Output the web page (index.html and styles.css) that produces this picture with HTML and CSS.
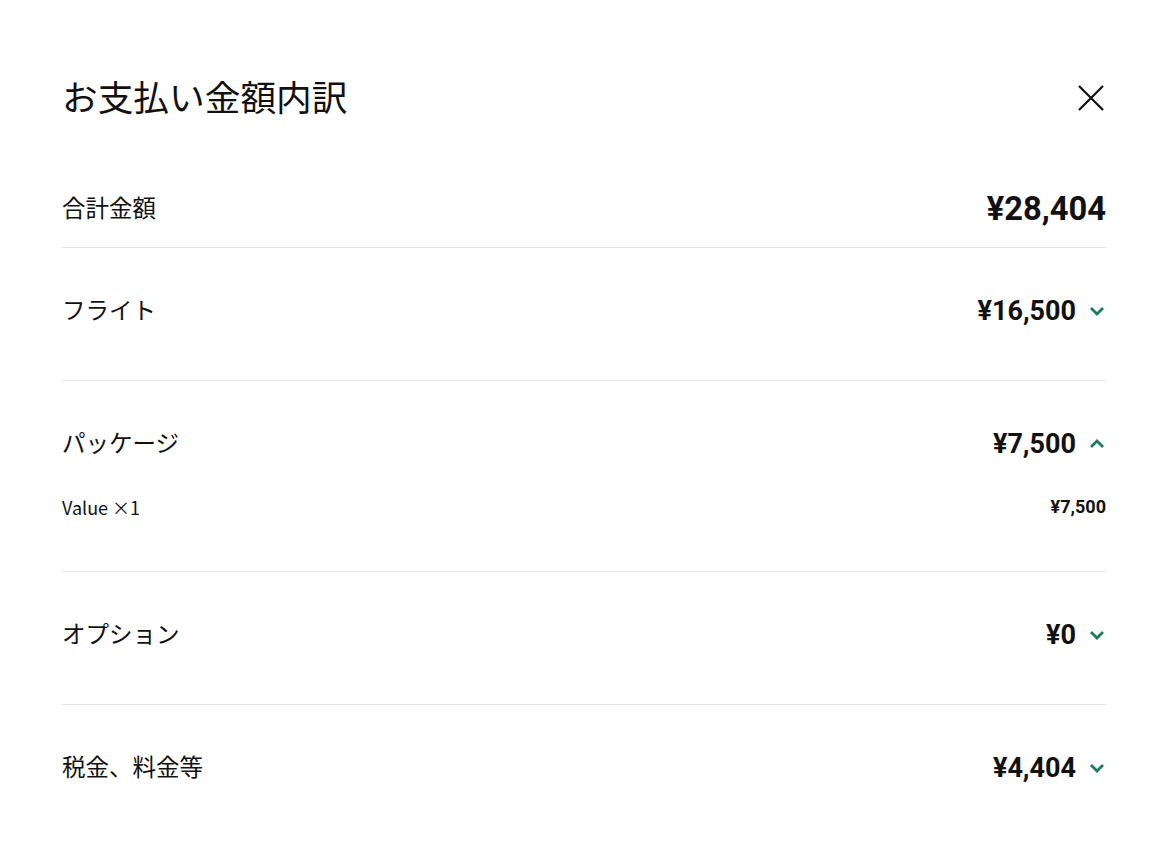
FILE: index.html
```html
<!DOCTYPE html>
<html lang="ja">
<head>
  <meta charset="UTF-8" />
  <meta name="viewport" content="width=device-width, initial-scale=1.0"/>
  <title>お支払い金額内訳</title>
  <link rel="stylesheet" href="styles.css">
</head>
<body>
<div class="modal">
  <div class="modal-head">
    <h2 class="modal-title">お支払い金額内訳</h2>
    <button class="close" aria-label="閉じる">
      <svg width="26" height="26" viewBox="0 0 26 26"><path d="M1 1L25 25M25 1L1 25" stroke="#111" stroke-width="2.2" fill="none"/></svg>
    </button>
  </div>

  <div class="total">
    <span class="label">合計金額</span>
    <span class="total-amount">¥28,404</span>
  </div>

  <div class="row">
    <div class="row-head">
      <span class="label">フライト</span>
      <span class="amount">¥16,500</span>
      <svg class="chev" width="16" height="16" viewBox="0 0 16 16"><path d="M2 5L8 11L14 5" /></svg>
    </div>
  </div>

  <div class="row">
    <div class="row-head">
      <span class="label">パッケージ</span>
      <span class="amount">¥7,500</span>
      <svg class="chev" width="16" height="16" viewBox="0 0 16 16"><path d="M2 11L8 5L14 11" /></svg>
    </div>
    <div class="detail">
      <span class="detail-label">Value ×1</span>
      <span class="detail-amount">¥7,500</span>
    </div>
  </div>

  <div class="row">
    <div class="row-head">
      <span class="label">オプション</span>
      <span class="amount">¥0</span>
      <svg class="chev" width="16" height="16" viewBox="0 0 16 16"><path d="M2 5L8 11L14 5" /></svg>
    </div>
  </div>

  <div class="row last">
    <div class="row-head">
      <span class="label">税金、料金等</span>
      <span class="amount">¥4,404</span>
      <svg class="chev" width="16" height="16" viewBox="0 0 16 16"><path d="M2 5L8 11L14 5" /></svg>
    </div>
  </div>
</div>
</body>
</html>
```

FILE: styles.css
```css
body {
  margin: 0;
  background-color: #fff;
  color: #111;
  font-family: "Noto Sans CJK JP", "Noto Sans", sans-serif;
}

.modal {
  padding: 74px 64px 0 62px;
}

.modal-head {
  display: flex;
  justify-content: space-between;
  align-items: center;
  height: 48px;
}

.modal-title {
  margin: 0;
  padding-bottom: 4px;
  font-size: 35.7px;
  font-weight: 400;
  line-height: 44px;
}

.close {
  border: none;
  background: none;
  padding: 0;
  margin-right: 2px;
  cursor: pointer;
  display: flex;
}

.total {
  display: flex;
  justify-content: space-between;
  align-items: center;
  height: 46px;
  margin-top: 64px;
  padding-bottom: 15px;
  border-bottom: 1px solid #e2e7e7;
}

.label {
  font-size: 23.5px;
  line-height: 40px;
  padding-bottom: 4px;
}

.total-amount {
  font-family: Roboto, "Liberation Sans", sans-serif;
  font-weight: 700;
  font-size: 32.7px;
}

.row {
  padding: 40px 0 46px;
  border-bottom: 1px solid #e2e7e7;
}

.row.last {
  border-bottom: none;
}

.row-head {
  display: flex;
  align-items: center;
  height: 46px;
}

.row-head .label {
  flex: 1;
}

.amount {
  font-family: Roboto, "Liberation Sans", sans-serif;
  font-weight: 700;
  font-size: 27px;
}

.chev {
  margin-left: 13px;
  margin-right: 1px;
  fill: none;
  stroke: #1a7d5e;
  stroke-width: 2.8;
}

.detail {
  display: flex;
  justify-content: space-between;
  align-items: center;
  margin-top: 24px;
  height: 34px;
}

.detail-label {
  font-size: 18px;
  padding-bottom: 2px;
}

.detail-amount {
  font-family: Roboto, "Liberation Sans", sans-serif;
  font-weight: 700;
  font-size: 18px;
  padding-bottom: 3px;
}
```
